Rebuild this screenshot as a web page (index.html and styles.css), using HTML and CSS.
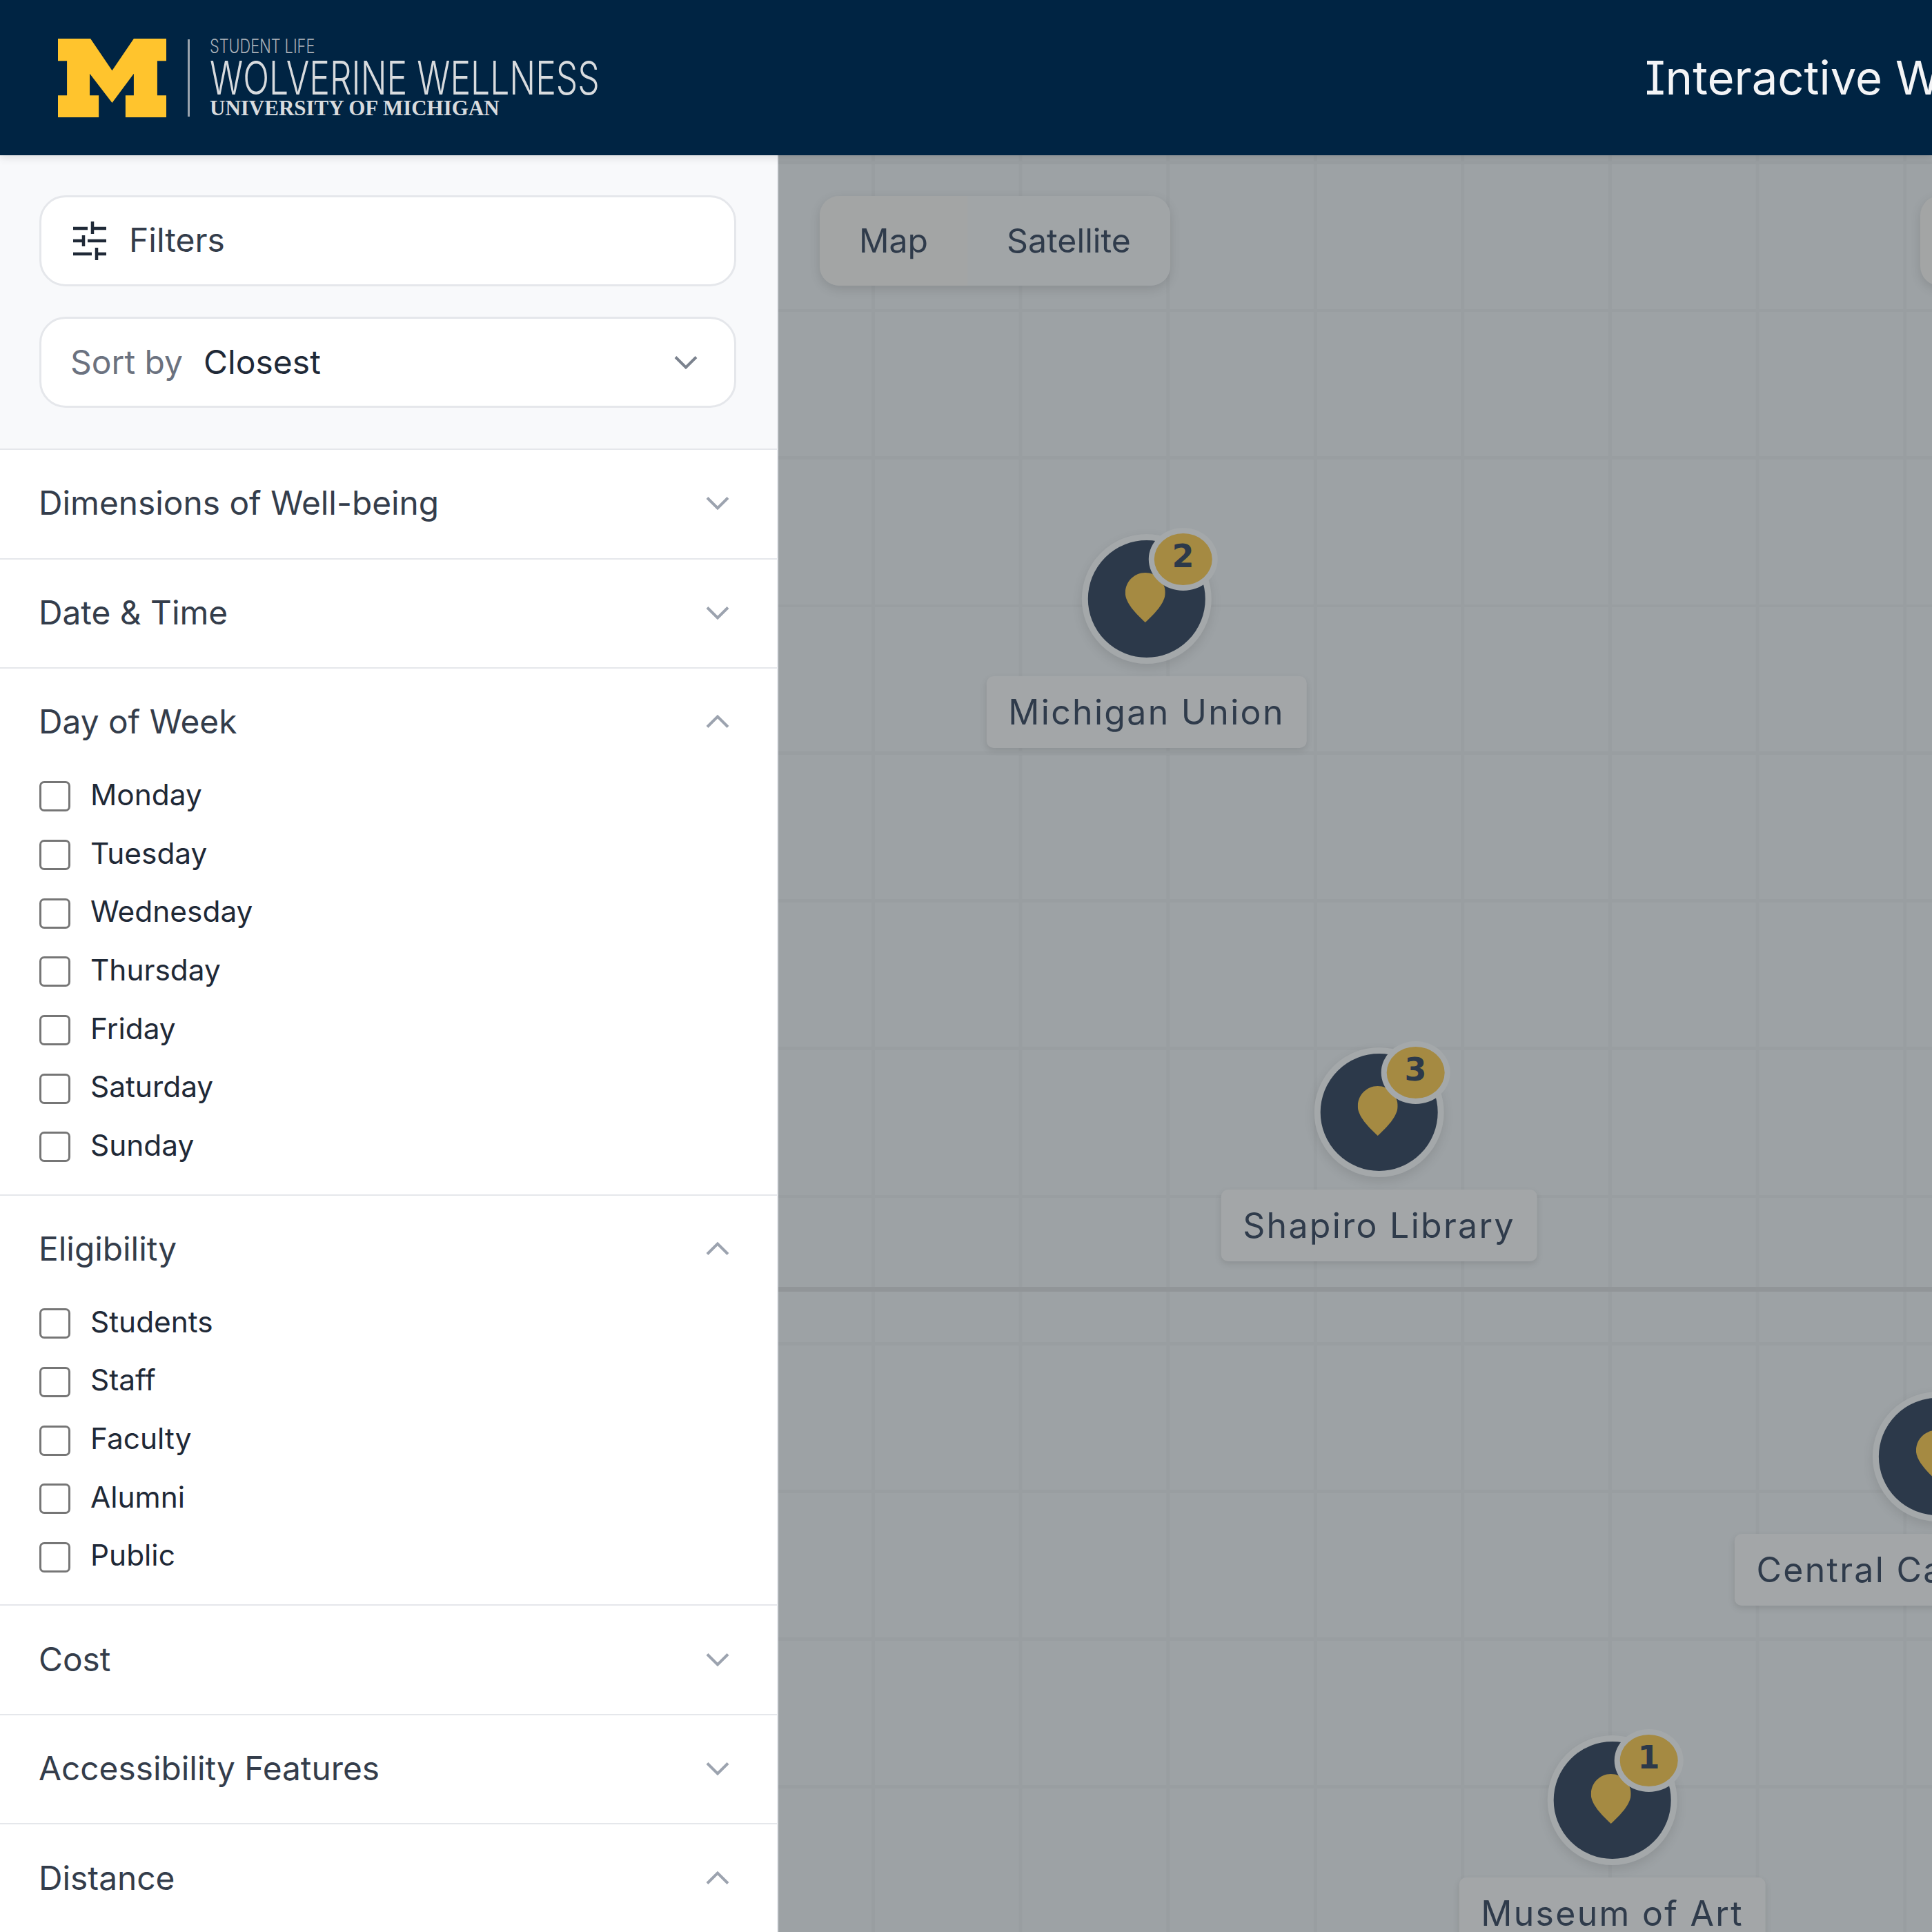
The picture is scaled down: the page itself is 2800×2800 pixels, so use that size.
FILE: index.html
```html
<!DOCTYPE html>
<html lang="en">
    <head>
        <meta charset="UTF-8" />
        <title>Interactive Wellness Map</title>
        <link rel="stylesheet" href="styles.css">
    </head>
    <body>
        <header class="topbar">
            <div class="logo">
                <svg class="logo-m" viewBox="0 0 300 337" preserveAspectRatio="none">
                    <path d="M0 0H90L150 137L210 0H300V95H275V243H300V337H187V243H210V150L150 275L88 150V243H113V337H0V243H25V95H0Z" />
                </svg>
                <div class="logo-rule"></div>
                <div class="logo-text">
                    <div class="logo-small">STUDENT LIFE</div>
                    <div class="logo-big">WOLVERINE WELLNESS</div>
                    <div class="logo-uni">UNIVERSITY OF MICHIGAN</div>
                </div>
            </div>
            <div class="site-title">Interactive Wellness Map</div>
        </header>
        <div class="content">
            <aside class="sidebar">
                <div class="tools">
                    <div class="tool-btn filter-btn">
                        <svg class="filter-icon" viewBox="0 0 48 56">
                            <path d="M0 10H21M28 0V18M28 10H48M0 28H15M15 20V36M21 28H48M0 47H27M34 38V56M34 47H48" />
                        </svg>
                        <span>Filters</span>
                    </div>
                    <div class="tool-btn sort-btn">
                        <span class="sort-label">Sort by</span>
                        <span class="sort-value">Closest</span>
                        <svg class="chevron sort-chevron" viewBox="0 0 24 24"><path d="M6 9L12 15L18 9" /></svg>
                    </div>
                </div>

                <section class="group">
                    <div class="group-head">
                        <span>Dimensions of Well-being</span>
                        <svg class="chevron" viewBox="0 0 24 24"><path d="M6 9L12 15L18 9" /></svg>
                    </div>
                </section>
                <section class="group">
                    <div class="group-head">
                        <span>Date &amp; Time</span>
                        <svg class="chevron" viewBox="0 0 24 24"><path d="M6 9L12 15L18 9" /></svg>
                    </div>
                </section>
                <section class="group">
                    <div class="group-head">
                        <span>Day of Week</span>
                        <svg class="chevron" viewBox="0 0 24 24"><path d="M6 15L12 9L18 15" /></svg>
                    </div>
                    <div class="checks">
                        <label class="check"><span class="box"></span>Monday</label>
                        <label class="check"><span class="box"></span>Tuesday</label>
                        <label class="check"><span class="box"></span>Wednesday</label>
                        <label class="check"><span class="box"></span>Thursday</label>
                        <label class="check"><span class="box"></span>Friday</label>
                        <label class="check"><span class="box"></span>Saturday</label>
                        <label class="check"><span class="box"></span>Sunday</label>
                    </div>
                </section>
                <section class="group">
                    <div class="group-head">
                        <span>Eligibility</span>
                        <svg class="chevron" viewBox="0 0 24 24"><path d="M6 15L12 9L18 15" /></svg>
                    </div>
                    <div class="checks">
                        <label class="check"><span class="box"></span>Students</label>
                        <label class="check"><span class="box"></span>Staff</label>
                        <label class="check"><span class="box"></span>Faculty</label>
                        <label class="check"><span class="box"></span>Alumni</label>
                        <label class="check"><span class="box"></span>Public</label>
                    </div>
                </section>
                <section class="group">
                    <div class="group-head">
                        <span>Cost</span>
                        <svg class="chevron" viewBox="0 0 24 24"><path d="M6 9L12 15L18 9" /></svg>
                    </div>
                </section>
                <section class="group">
                    <div class="group-head">
                        <span>Accessibility Features</span>
                        <svg class="chevron" viewBox="0 0 24 24"><path d="M6 9L12 15L18 9" /></svg>
                    </div>
                </section>
                <section class="group">
                    <div class="group-head">
                        <span>Distance</span>
                        <svg class="chevron" viewBox="0 0 24 24"><path d="M6 15L12 9L18 15" /></svg>
                    </div>
                </section>
            </aside>

            <main class="map">
                <div class="road"></div>
                <div class="map-types">
                    <div class="map-type map-type-on">Map</div>
                    <div class="map-type">Satellite</div>
                </div>
                <div class="map-corner"></div>

                <div class="place place-union">
                    <div class="disc">
                        <svg class="pin" viewBox="0 0 58 72"><path d="M29 0C45 0 58 13 58 29C58 44 42 60 29 72C16 60 0 44 0 29C0 13 13 0 29 0Z" /></svg>
                        <span class="count">2</span>
                    </div>
                    <div class="place-name">Michigan Union</div>
                </div>
                <div class="place place-shapiro">
                    <div class="disc">
                        <svg class="pin" viewBox="0 0 58 72"><path d="M29 0C45 0 58 13 58 29C58 44 42 60 29 72C16 60 0 44 0 29C0 13 13 0 29 0Z" /></svg>
                        <span class="count">3</span>
                    </div>
                    <div class="place-name">Shapiro Library</div>
                </div>
                <div class="place place-central">
                    <div class="disc">
                        <svg class="pin" viewBox="0 0 58 72"><path d="M29 0C45 0 58 13 58 29C58 44 42 60 29 72C16 60 0 44 0 29C0 13 13 0 29 0Z" /></svg>
                        <span class="count">1</span>
                    </div>
                    <div class="place-name">Central Campus Rec</div>
                </div>
                <div class="place place-museum">
                    <div class="disc">
                        <svg class="pin" viewBox="0 0 58 72"><path d="M29 0C45 0 58 13 58 29C58 44 42 60 29 72C16 60 0 44 0 29C0 13 13 0 29 0Z" /></svg>
                        <span class="count">1</span>
                    </div>
                    <div class="place-name">Museum of Art</div>
                </div>
            </main>
        </div>
    </body>
</html>
```

FILE: styles.css
```css
* {
    box-sizing: border-box;
}
html, body {
    margin: 0;
    height: 2800px;
    overflow: hidden;
}
body {
    font-family: Inter, "Noto Sans", sans-serif;
    font-optical-sizing: none;
    color: #343d4b;
    background: white;
}

/* header */
.topbar {
    height: 225px;
    background: #002443;
    display: flex;
    align-items: center;
    padding-left: 84px;
    position: relative;
    z-index: 2;
    box-shadow: 0 3px 12px rgba(0, 0, 0, 0.12);
    overflow: hidden;
}
.logo {
    display: flex;
    align-items: center;
    width: 2300px;
    flex: none;
    height: 114px;
}
.logo-m {
    width: 157px;
    height: 114px;
    fill: #ffc42d;
    flex: none;
}
.logo-rule {
    width: 3px;
    height: 112px;
    background: #9aa4ae;
    margin-left: 31px;
}
.logo-text {
    margin-left: 29px;
    height: 114px;
    color: #d8dbde;
    white-space: nowrap;
}
.logo-small {
    height: 27px;
    font-size: 29px;
    line-height: 22px;
    font-weight: 300;
    transform: scaleX(0.75);
    transform-origin: left;
    color: #aab1b8;
}
.logo-big {
    height: 60px;
    font-size: 67px;
    line-height: 60px;
    font-weight: 300;
    transform: scaleX(0.744);
    transform-origin: left;
}
.logo-uni {
    height: 27px;
    font-family: "Liberation Serif", serif;
    font-weight: bold;
    font-size: 31px;
    line-height: 27px;
}
.site-title {
    flex: none;
    font-size: 67px;
    color: #f3f4f6;
    white-space: nowrap;
    font-feature-settings: "cv08";
}

/* page below header */
.content {
    display: flex;
    height: 2575px;
}
.sidebar {
    width: 1128px;
    flex: none;
    background: white;
    border-right: 2.5px solid #e5e7eb;
    overflow: hidden;
}
.tools {
    height: 425px;
    background: #f8f9fb;
    padding: 58px 59px 58px 57px;
    display: flex;
    flex-direction: column;
    gap: 44px;
}
.tool-btn {
    height: 132px;
    flex: none;
    background: white;
    border: 3px solid #e5e7eb;
    border-radius: 38px;
    display: flex;
    align-items: center;
    padding: 0 40px 1px 42px;
    font-size: 48px;
}
.filter-btn {
    padding: 0 0 3px 46px;
}
.filter-icon {
    width: 48px;
    height: 56px;
    margin: 3px 33px 0 0;
    overflow: visible;
    fill: none;
    stroke: #1f2937;
    stroke-width: 4.5;
}
.sort-label {
    color: #6b7280;
    margin-right: 30px;
}
.sort-value {
    color: #1f2937;
}
.chevron {
    width: 60px;
    height: 60px;
    flex: none;
    fill: none;
    stroke: #9ca3af;
    stroke-width: 1.6;
}
.sort-chevron {
    margin-left: auto;
    stroke: #7b828e;
}
.group {
    border-top: 2.5px solid #e5e7eb;
}
.group-head {
    height: 156.5px;
    padding: 0 56px 2px;
    display: flex;
    align-items: center;
    justify-content: space-between;
    font-size: 47.8px;
}
.checks {
    display: flex;
    flex-direction: column;
    gap: 40px;
    padding: 5px 57px 47.5px;
}
.check {
    height: 44.7px;
    padding-bottom: 3px;
    display: flex;
    align-items: center;
    gap: 29px;
    font-size: 42.4px;
    color: #1f2937;
}
.box {
    width: 45px;
    height: 44px;
    flex: none;
    background: white;
    border: 3px solid #767676;
    border-radius: 7px;
    margin-top: 6px;
}

/* map */
.map {
    flex: 1;
    position: relative;
    overflow: hidden;
    background-color: #9da2a5;
    background-image:
        linear-gradient(90deg, #999ea1 5px, transparent 5px),
        linear-gradient(#999ea1 5px, transparent 5px);
    background-size: 213.6px 214px;
    background-position: 135px 8px;
}
.road {
    position: absolute;
    left: 0;
    right: 0;
    top: 1640px;
    height: 7px;
    background: #919598;
}
.map-types {
    position: absolute;
    left: 60px;
    top: 59px;
    height: 130px;
    display: flex;
    border-radius: 28px;
    overflow: hidden;
    box-shadow: 0 5px 16px rgba(0, 0, 0, 0.12);
    font-size: 48.2px;
    color: #2f3b4b;
}
.map-type {
    padding: 0 57px 2px;
    display: flex;
    align-items: center;
    background: #a1a5a7;
}
.map-type-on {
    background: #a3a5a5;
}
.map-corner {
    position: absolute;
    left: 1655px;
    top: 59px;
    width: 200px;
    height: 130px;
    border-radius: 28px;
    background: #a3a5a5;
    box-shadow: 0 5px 16px rgba(0, 0, 0, 0.12);
}
.place {
    position: absolute;
    display: flex;
    flex-direction: column;
    align-items: center;
    gap: 18px;
    transform: translateX(-50%);
}
.place-union {
    left: 533.5px;
    top: 549px;
}
.place-shapiro {
    left: 870.5px;
    top: 1293px;
}
.place-central {
    left: 1679.5px;
    top: 1792px;
}
.place-museum {
    left: 1208.5px;
    top: 2290px;
}
.disc {
    width: 188px;
    height: 188px;
    border-radius: 50%;
    background: #2c394a;
    border: 9px solid #a4a8aa;
    position: relative;
    display: flex;
    align-items: center;
    justify-content: center;
    box-shadow: 0 6px 16px rgba(0, 0, 0, 0.1);
}
.pin {
    width: 58px;
    height: 72px;
    fill: #a58a42;
    margin: -4px 4px 0 0;
}
.count {
    position: absolute;
    right: -18px;
    top: -18px;
    width: 100px;
    height: 91px;
    border-radius: 50%;
    background: #a58a42;
    border: 8px solid #a4a8aa;
    padding-bottom: 9px;
    display: flex;
    align-items: center;
    justify-content: center;
    font-family: "DejaVu Sans", sans-serif;
    font-size: 46px;
    font-weight: bold;
    color: #2c394a;
}
.place-name {
    height: 104px;
    padding: 0 32px;
    display: flex;
    align-items: center;
    background: #a3a6a8;
    border-radius: 10px;
    box-shadow: 0 4px 10px rgba(0, 0, 0, 0.1);
    font-size: 50px;
    letter-spacing: 2.3px;
    color: #2f3b4b;
    white-space: nowrap;
}
```
